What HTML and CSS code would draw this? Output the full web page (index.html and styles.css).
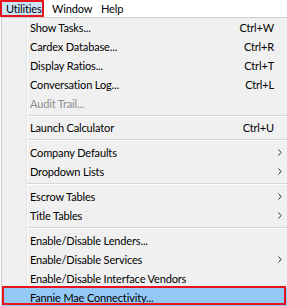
FILE: index.html
```html
<!DOCTYPE html>
<html>
<head>
<meta charset="utf-8">
<link rel="stylesheet" href="styles.css">
</head>
<body>
<div class="menubar">
  <span class="mb-item mb-active">Utilities</span>
  <span class="mb-item mb-window">Window</span>
  <span class="mb-item">Help</span>
</div>
<div class="menu">
  <div class="item"><span class="label">Show Tasks...</span><span class="key">Ctrl+W</span><span class="sub"></span></div>
  <div class="item"><span class="label">Cardex Database...</span><span class="key">Ctrl+R</span><span class="sub"></span></div>
  <div class="item"><span class="label">Display Ratios...</span><span class="key">Ctrl+T</span><span class="sub"></span></div>
  <div class="item"><span class="label">Conversation Log...</span><span class="key">Ctrl+L</span><span class="sub"></span></div>
  <div class="item disabled"><span class="label">Audit Trail...</span><span class="key"></span><span class="sub"></span></div>
  <div class="sep sep-short"></div>
  <div class="item"><span class="label">Launch Calculator</span><span class="key">Ctrl+U</span><span class="sub"></span></div>
  <div class="sep"></div>
  <div class="item"><span class="label">Company Defaults</span><span class="key"></span><span class="sub"><svg width="4" height="7" viewBox="0 0 4 7"><path d="M0.5 0.5 L3.2 3.5 L0.5 6.5" fill="none" stroke="#333" stroke-width="1"/></svg></span></div>
  <div class="item"><span class="label">Dropdown Lists</span><span class="key"></span><span class="sub"><svg width="4" height="7" viewBox="0 0 4 7"><path d="M0.5 0.5 L3.2 3.5 L0.5 6.5" fill="none" stroke="#333" stroke-width="1"/></svg></span></div>
  <div class="sep"></div>
  <div class="item"><span class="label">Escrow Tables</span><span class="key"></span><span class="sub"><svg width="4" height="7" viewBox="0 0 4 7"><path d="M0.5 0.5 L3.2 3.5 L0.5 6.5" fill="none" stroke="#333" stroke-width="1"/></svg></span></div>
  <div class="item"><span class="label">Title Tables</span><span class="key"></span><span class="sub"><svg width="4" height="7" viewBox="0 0 4 7"><path d="M0.5 0.5 L3.2 3.5 L0.5 6.5" fill="none" stroke="#333" stroke-width="1"/></svg></span></div>
  <div class="sep"></div>
  <div class="item"><span class="label">Enable/Disable Lenders...</span><span class="key"></span><span class="sub"></span></div>
  <div class="item"><span class="label">Enable/Disable Services</span><span class="key"></span><span class="sub"><svg width="4" height="7" viewBox="0 0 4 7"><path d="M0.5 0.5 L3.2 3.5 L0.5 6.5" fill="none" stroke="#333" stroke-width="1"/></svg></span></div>
  <div class="item"><span class="label">Enable/Disable Interface Vendors</span><span class="key"></span><span class="sub"></span></div>
  <div class="item selected"><span class="label">Fannie Mae Connectivity...</span><span class="key"></span><span class="sub"></span></div>
</div>
</body>
</html>
```

FILE: styles.css
```css
html, body {
  margin: 0;
  padding: 0;
  background: #ffffff;
  overflow: hidden;
}
body {
  width: 287px;
  height: 306px;
  font-family: "Lato", "Noto Sans", sans-serif;
  font-size: 11px;
  letter-spacing: -0.15px;
  color: #000;
}
.menubar {
  display: flex;
  height: 17px;
  background: #ffffff;
}
.mb-item {
  display: block;
  flex: none;
  height: 17px;
  line-height: 17px;
  box-sizing: border-box;
  white-space: nowrap;
}
.mb-active {
  width: 44px;
  padding-left: 4px;
  border: 2px solid #e8141d;
  background: #cce4f7;
  line-height: 13px;
}
.mb-window {
  margin-left: 8px;
  width: 49px;
}
.menu {
  margin-left: 1px;
  width: 292px;
  border: 1px solid #cccccc;
  background: linear-gradient(to right, transparent 24px, #e3e3e3 24px, #e3e3e3 25px, #ffffff 25px, #ffffff 26px, transparent 26px), #f0f0f0;
  box-sizing: border-box;
  padding-bottom: 20px;
}
.item {
  position: relative;
  display: flex;
  align-items: center;
  height: 19px;
  line-height: 19px;
  padding-left: 28px;
  white-space: nowrap;
}
.label {
  flex: 1;
}
.key {
  text-align: right;
}
.sub {
  width: 18px;
  display: flex;
  align-items: center;
  padding-left: 4px;
  box-sizing: border-box;
}
.sub svg {
  display: block;
}
.disabled {
  color: #8d8d8d;
}
.sep {
  height: 6px;
  margin-left: 25px;
  background: linear-gradient(to bottom, transparent 2px, #d7d7d7 2px, #d7d7d7 3px, #ffffff 3px, #ffffff 4px, transparent 4px);
}
.sep-short {
  height: 5px;
}
.selected {
  background: #94c9f5;
}
.selected::after {
  content: "";
  position: absolute;
  top: -2px;
  left: 0;
  width: 284px;
  height: 19px;
  border: 2px solid #e8141d;
  box-sizing: border-box;
}
```
